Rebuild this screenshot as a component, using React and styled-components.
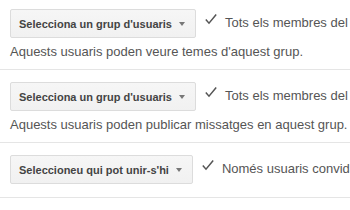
import React from "react";
import styled, { createGlobalStyle } from "styled-components";

const Global = createGlobalStyle`
  html, body { margin: 0; padding: 0; background: #fff; }
  body { font-family: "Liberation Sans", Arial, sans-serif; overflow: hidden; }
`;

const Page = styled.div`
  margin-top: -3px;
  width: 350px;
`;

const Row = styled.div`
  padding: 12px 0 13px 10px;
  border-bottom: 1px solid #e5e5e5;
  white-space: nowrap;
  overflow: hidden;
`;

const Line = styled.div`
  display: flex;
  align-items: center;
  height: 29px;
`;

const SelectButton = styled.div`
  display: inline-flex;
  align-items: center;
  box-sizing: border-box;
  height: 29px;
  padding: 0 10px 0 8px;
  border: 1px solid #dcdcdc;
  border-radius: 2px;
  background: linear-gradient(#f6f6f6, #f1f1f1);
  color: #444;
  font-size: 11px;
  font-weight: bold;
  gap: 7px;
  flex-shrink: 0;
`;

const Caret = styled.span`
  width: 0;
  height: 0;
  border-left: 3px solid transparent;
  border-right: 3px solid transparent;
  border-top: 4px solid #777;
  margin-top: 1px;
`;

const Check = styled.svg`
  margin: 5px 8px 0 ${(p) => p.$gap}px;
  flex-shrink: 0;
  align-self: flex-start;
`;

const Option = styled.span`
  font-size: 13px;
  color: #555;
  margin-top: -2px;
`;

const Description = styled.div`
  font-size: 13px;
  line-height: 20px;
  color: #555;
  margin: 4px 0 -6px;
`;

const CheckIcon = ({ gap }) => (
  <Check $gap={gap} width="12" height="11" viewBox="0 0 12 11">
    <path d="M0.8 5.6 L4 9.2 L11.2 0.6" fill="none" stroke="#555" strokeWidth="1.5" />
  </Check>
);

const rows = [
  {
    label: "Selecciona un grup d'usuaris",
    option: "Tots els membres del grup",
    desc: "Aquests usuaris poden veure temes d'aquest grup.",
  },
  {
    label: "Selecciona un grup d'usuaris",
    option: "Tots els membres del grup",
    desc: "Aquests usuaris poden publicar missatges en aquest grup.",
  },
  {
    label: "Seleccioneu qui pot unir-s'hi",
    option: "Només usuaris convidats",
  },
];

export default function App() {
  return (
    <>
      <Global />
      <Page>
        {rows.map((r, i) => (
          <Row key={i}>
            <Line>
              <SelectButton>
                {r.label}
                <Caret />
              </SelectButton>
              <CheckIcon gap={9} />
              <Option>{r.option}</Option>
            </Line>
            {r.desc && <Description>{r.desc}</Description>}
          </Row>
        ))}
      </Page>
    </>
  );
}
